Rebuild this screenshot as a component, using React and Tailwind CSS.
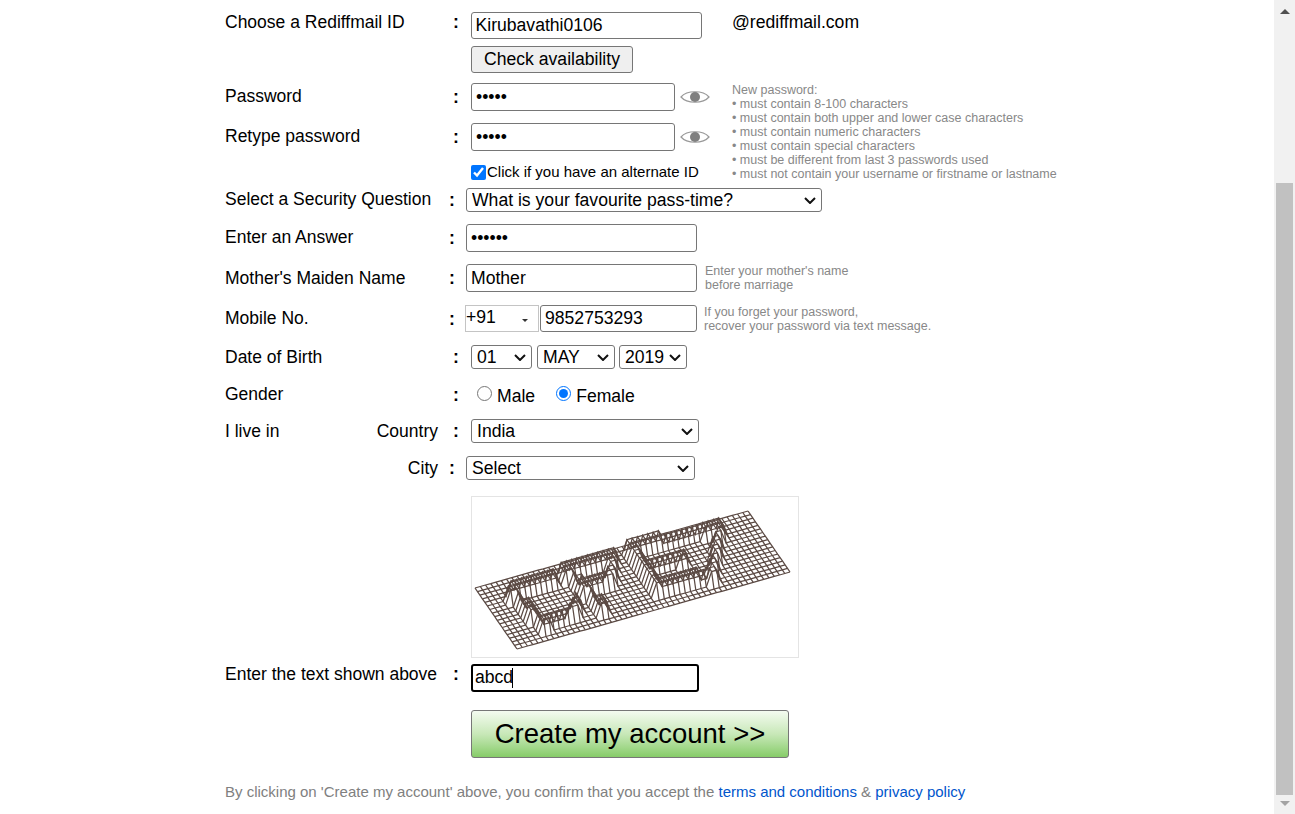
import React from "react";

const cols = 52;
const rows = 17;

// raised strokes of the captcha letters, in grid cells
const strokes = [
  [4.5, 4.8, 13.2, 4.4], [4.5, 4.8, 6.2, 14.2], [6.2, 14.2, 12.3, 14], [12.3, 14, 14, 11.5],
  [15.5, 3.2, 24.6, 3.7], [15.5, 3.2, 17.5, 14.6], [24.6, 3.7, 22, 8.5], [17, 8.5, 22, 8.5],
  [28.3, 2.6, 36.1, 2.9], [28.3, 2.6, 28.6, 13.4], [28.5, 8, 36, 8.2], [28.6, 13.4, 36.4, 13.8],
  [37.5, 2.9, 45, 3.4], [45, 3.4, 38.5, 14.4],
];

function lift(u, v) {
  let best = 9;
  for (const [a, b, c, d] of strokes) {
    const dx = c - a;
    const dy = d - b;
    const t = Math.max(0, Math.min(1, ((u - a) * dx + (v - b) * dy) / (dx * dx + dy * dy)));
    best = Math.min(best, Math.hypot(u - a - t * dx, v - b - t * dy));
  }
  return best < 0.85 ? 14 : 0;
}

function point(i, j) {
  const u = i / cols;
  const v = j / rows;
  const x = 3 + u * 273 + v * 42;
  const y = 91 - u * 77 + v * 61 - lift(i, j);
  return `${x.toFixed(1)},${y.toFixed(1)}`;
}

function Captcha() {
  const lines = [];
  for (let j = 0; j <= rows; j++) {
    const pts = [];
    for (let i = 0; i <= cols; i++) pts.push(point(i, j));
    lines.push(pts.join(" "));
  }
  for (let i = 0; i <= cols; i++) {
    const pts = [];
    for (let j = 0; j <= rows; j++) pts.push(point(i, j));
    lines.push(pts.join(" "));
  }
  return (
    <svg width="326" height="160" viewBox="0 0 326 160" className="block">
      {lines.map((p, n) => (
        <polyline key={n} points={p} fill="none" stroke="#5b4a44" strokeWidth="1.25" />
      ))}
    </svg>
  );
}

function Eye() {
  return (
    <svg width="30" height="18" viewBox="0 0 30 18" className="ml-[5px] shrink-0">
      <path d="M1 9 C7 2 23 2 29 9 C23 16 7 16 1 9 Z" fill="none" stroke="#999999" strokeWidth="1.2" />
      <circle cx="15" cy="9" r="5" fill="#7f7f7f" />
    </svg>
  );
}

function Label({ wide = true, lift = "", colonLift = "", children }) {
  return (
    <>
      <div className={`${wide ? "w-[228px]" : "w-[224px]"} shrink-0 text-[17.5px] leading-[20px] ${lift}`}>{children}</div>
      <div className={`${wide ? "w-[18px]" : "w-[17px]"} shrink-0 font-bold leading-[20px] ${colonLift}`}>:</div>
    </>
  );
}

function Select({ value, width, className = "" }) {
  return (
    <div className={`relative shrink-0 ${width} ${className}`}>
      <select
        defaultValue={value}
        className="block w-full h-[24px] appearance-none border border-[#767676] rounded-[3px] bg-white pl-[5px] pt-[2px] leading-none"
      >
        <option>{value}</option>
      </select>
      <svg width="12" height="7" viewBox="0 0 12 7" className="absolute right-[6px] top-[9px] pointer-events-none">
        <path d="M1 1 L6 6 L11 1" fill="none" stroke="#111111" strokeWidth="2" />
      </svg>
    </div>
  );
}

const boxInput = "border border-[#767676] rounded-[3px] bg-white px-[4px] outline-none";

export default function App() {
  return (
    <div className="flex h-[814px] overflow-hidden bg-white text-black text-[17.6px] font-['Liberation_Sans',Arial,sans-serif]">
      <main className="flex-1 pl-[225px]">
        <div className="flex">
          <div className="w-[507px] shrink-0">
            <div className="flex items-start mt-[12px] h-[27px] whitespace-nowrap">
              <Label>Choose a Rediffmail ID</Label>
              <input readOnly defaultValue="Kirubavathi0106" className="border border-[#767676] rounded-[3px] bg-white px-[3.5px] outline-none w-[231px] h-[27px]" />
              <span className="ml-[30px] leading-[20px]">@rediffmail.com</span>
            </div>
            <button className="block mt-[7px] ml-[246px] w-[162px] h-[27px] bg-[#efefef] border border-[#767676] rounded-[3px] leading-none">
              Check availability
            </button>
            <div className="flex items-center mt-[10px] h-[28px]">
              <Label lift="pb-[2px]">Password</Label>
              <input readOnly type="password" defaultValue="abcde" className={`${boxInput} w-[204px] h-[28px]`} />
              <Eye />
            </div>
            <div className="flex items-center mt-[12px] h-[28px]">
              <Label lift="pb-[2px]">Retype password</Label>
              <input readOnly type="password" defaultValue="abcde" className={`${boxInput} w-[204px] h-[28px]`} />
              <Eye />
            </div>
            <div className="flex items-center mt-[11px] h-[20px] ml-[246px] text-[15px] whitespace-nowrap">
              <input readOnly type="checkbox" checked className="w-[15px] h-[15px] m-0 mr-px" />
              <span>Click if you have an alternate ID</span>
            </div>
          </div>
          <div className="pt-[83px] text-[12.5px] leading-[14px] text-[#888888] whitespace-nowrap">
            <p>New password:</p>
            <p>• must contain 8-100 characters</p>
            <p>• must contain both upper and lower case characters</p>
            <p>• must contain numeric characters</p>
            <p>• must contain special characters</p>
            <p>• must be different from last 3 passwords used</p>
            <p>• must not contain your username or firstname or lastname</p>
          </div>
        </div>

        <div className="flex items-center mt-[6px] h-[24px]">
          <Label wide={false} lift="pb-[2px]">Select a Security Question</Label>
          <Select value="What is your favourite pass-time?" width="w-[356px]" />
        </div>
        <div className="flex items-center mt-[12px] h-[28px]">
          <Label wide={false} lift="pb-[2px]">Enter an Answer</Label>
          <input readOnly type="password" defaultValue="abcdef" className={`${boxInput} w-[231px] h-[28px]`} />
        </div>
        <div className="flex items-center mt-[12px] h-[28px]">
          <Label wide={false}>Mother's Maiden Name</Label>
          <input readOnly defaultValue="Mother" className={`${boxInput} w-[231px] h-[28px]`} />
          <p className="ml-[8px] text-[12.5px] leading-[14px] text-[#888888]">
            Enter your mother's name
            <br />
            before marriage
          </p>
        </div>
        <div className="flex items-center mt-[13px] h-[27px]">
          <Label wide={false} lift="pb-[2px]">Mobile No.</Label>
          <div className="relative -ml-px w-[74px] h-[27px] border border-[#c4c4c4] leading-[23px]">
            +91
            <span className="absolute left-[56px] top-[13px] border-x-[3px] border-t-[3px] border-x-transparent border-t-[#333333]"></span>
          </div>
          <input readOnly defaultValue="9852753293" className={`${boxInput} ml-px w-[157px] h-[27px]`} />
          <p className="ml-[7px] text-[12.5px] leading-[14px] text-[#888888] whitespace-nowrap">
            If you forget your password,
            <br />
            recover your password via text message.
          </p>
        </div>
        <div className="flex items-center mt-[13px] h-[24px]">
          <Label>Date of Birth</Label>
          <Select value="01" width="w-[61px]" />
          <Select value="MAY" width="w-[78px]" className="ml-[5px]" />
          <Select value="2019" width="w-[68px]" className="ml-[4px]" />
        </div>
        <div className="flex items-center mt-[16px] h-[20px]">
          <Label lift="pb-[2px]">Gender</Label>
          <input readOnly type="radio" name="g" className="ml-[6px] mb-[3px] w-[15px] h-[15px] m-0" />
          <span className="ml-[5px] pt-[2px]">Male</span>
          <input readOnly type="radio" name="g" defaultChecked className="ml-[21px] mb-[3px] w-[15px] h-[15px] m-0" />
          <span className="ml-[5px] pt-[2px]">Female</span>
        </div>
        <div className="flex items-center mt-[14px] h-[24px]">
          <div className="flex justify-between w-[213px] mr-[15px] shrink-0 text-[17.5px] leading-[20px]">
            <span>I live in</span>
            <span>Country</span>
          </div>
          <div className="w-[18px] shrink-0 font-bold leading-[20px]">:</div>
          <Select value="India" width="w-[228px]" />
        </div>
        <div className="flex items-center mt-[13px] h-[24px]">
          <div className="w-[213px] mr-[11px] shrink-0 text-right text-[17.5px] leading-[20px]">City</div>
          <div className="w-[17px] shrink-0 font-bold leading-[20px]">:</div>
          <Select value="Select" width="w-[229px]" />
        </div>
        <div className="mt-[16px] ml-[246px] w-[328px] h-[162px] border border-[#e4e4e4]">
          <Captcha />
        </div>
        <div className="flex items-center mt-[6px] h-[28px]">
          <Label lift="pb-[8px]" colonLift="pb-[8px]">Enter the text shown above</Label>
          <div className="relative">
            <input
              readOnly
              defaultValue="abcd"
              className="block w-[228px] h-[28px] border-2 border-black rounded-[3px] bg-white px-[2px] pb-[2px] outline-none"
            />
            <span className="absolute left-[41px] top-[4px] w-px h-[20px] bg-black"></span>
          </div>
        </div>
        <button className="block mt-[18px] ml-[246px] w-[318px] h-[48px] border border-[#777777] rounded-[3px] text-[27.5px] leading-none bg-gradient-to-b from-[#f4fbf0] via-[#c8e8b8] to-[#86cc68]">
          Create my account &gt;&gt;
        </button>
        <p className="mt-[24px] h-[20px] text-[15px] leading-[20px] text-[#808080] whitespace-nowrap">
          By clicking on 'Create my account' above, you confirm that you accept the{" "}
          <a className="text-[#0055cc]">terms and conditions</a> &amp;{" "}
          <a className="text-[#0055cc]">privacy policy</a>
        </p>
      </main>

      <aside className="w-[21px] shrink-0 bg-[#f1f1f1] flex flex-col items-center">
        <div className="h-[183px] w-full flex justify-center pt-[9px]">
          <span className="h-0 border-x-[5px] border-b-[5px] border-x-transparent border-b-[#505050]"></span>
        </div>
        <div className="w-[17px] h-[612px] bg-[#c1c1c1]"></div>
        <span className="mt-[6px] h-0 border-x-[5px] border-t-[5px] border-x-transparent border-t-[#a3a3a3]"></span>
      </aside>
    </div>
  );
}
